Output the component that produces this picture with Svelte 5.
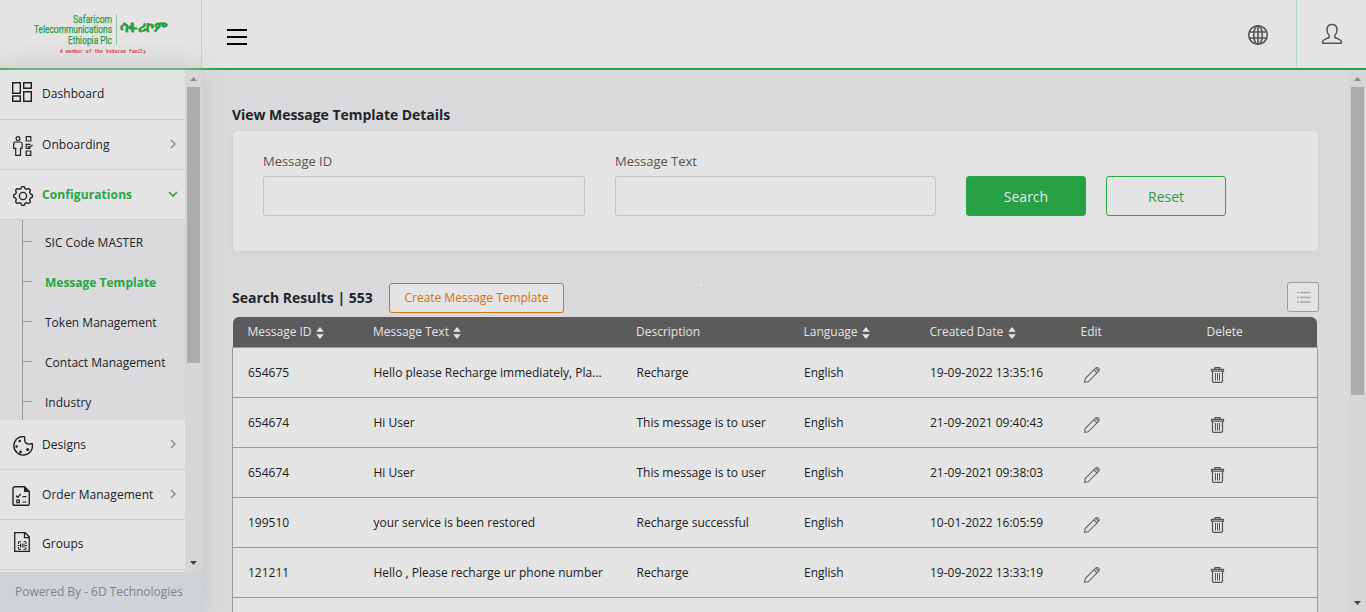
<script>
  const menuTop = [
    { label: 'Dashboard', icon: 'dash', arrow: '' },
    { label: 'Onboarding', icon: 'onboard', arrow: 'right' },
    { label: 'Configurations', icon: 'gear', arrow: 'down', active: true }
  ];
  const sub = ['SIC Code MASTER', 'Message Template', 'Token Management', 'Contact Management', 'Industry'];
  const menuBottom = [
    { label: 'Designs', icon: 'palette', arrow: 'right' },
    { label: 'Order Management', icon: 'order', arrow: 'right' },
    { label: 'Groups', icon: 'groups', arrow: '' }
  ];
  const columns = [
    { label: 'Message ID', sort: true },
    { label: 'Message Text', sort: true },
    { label: 'Description' },
    { label: 'Language', sort: true },
    { label: 'Created Date', sort: true },
    { label: 'Edit' },
    { label: 'Delete' }
  ];
  const rows = [
    ['654675', 'Hello please Recharge immediately, Pla...', 'Recharge', 'English', '19-09-2022 13:35:16'],
    ['654674', 'Hi User', 'This message is to user', 'English', '21-09-2021 09:40:43'],
    ['654674', 'Hi User', 'This message is to user', 'English', '21-09-2021 09:38:03'],
    ['199510', 'your service is been restored', 'Recharge successful', 'English', '10-01-2022 16:05:59'],
    ['121211', 'Hello , Please recharge ur phone number', 'Recharge', 'English', '19-09-2022 13:33:19'],
    ['', '', '', '', '']
  ];
  const gear = (() => {
    const pts = [];
    const n = 96;
    for (let i = 0; i < n; i++) {
      const a = (i / n) * Math.PI * 2;
      const r = 8.5 + 0.95 * Math.tanh(2.2 * Math.cos(8 * a));
      pts.push(`${(11 + r * Math.sin(a)).toFixed(2)} ${(10 - r * Math.cos(a)).toFixed(2)}`);
    }
    return 'M' + pts.join('L') + 'Z';
  })();
</script>

{#snippet menuIcon(name)}
  <svg class="micon" width="22" height="22" viewBox="0 0 22 22" fill="none" stroke="#222" stroke-width="1.2">
    {#if name === 'dash'}
      <path d="M.7.7h7.6v10.6H.7zM11.7.7h7.6v5.6h-7.6zM.7 14h7.6v5.300H.7zM11.7 9.700h7.600v9.600h-7.600z" stroke-width="1.400" />
    {:else if name === 'onboard'}
      <circle cx="6" cy="2.600" r="1.900" />
      <path d="M3.400 6h5.200q1.500 0 1.500 2v4.300H8.500v7H3.700v-7H1.700V8q0-2 1.700-2z" />
      <path d="M14.200.7h4.600v4.300h-4.600zM14.200 15h4.600v4.400h-4.600zM18.500 8.300h-4.300v4h4.300M16 10.200l1.300 1 3.300-2.300" />
    {:else if name === 'gear'}
      <path d={gear} stroke-width="1.400" />
      <circle cx="11" cy="10" r="3.600" stroke-width="1.400" />
    {:else if name === 'palette'}
      <path transform="translate(0 -1)" d="M11.800 1.500A9.300 9.300 0 1 0 20.300 9q.1-.5-.7-.4-3.900 1.400-6.200-1.100Q12.500 6.200 12.700 2.400q0-.9-.9-.9z" stroke-width="1.400" />
      <g fill="#222" stroke="none">
        <circle cx="7.700" cy="5" r="1.300" /><circle cx="4.600" cy="10.500" r="1.200" /><circle cx="8.500" cy="16" r="1.400" />
        <circle cx="15.700" cy="13.600" r="1.500" />
      </g>
    {:else if name === 'order'}
      <path d="M3 .8h9.500L17.300 5.600v12.200q0 1.500-1.500 1.500H2.500Q1 19.300 1 17.800V2.800Q1 .8 3 .8z" stroke-width="1.400" />
      <path d="M12 .5v5.500h5.500z" fill="#222" stroke="none" />
      <path d="M4 9.700l1.700 1.600L8.800 8M10.500 10.700h4M10.500 16h4M4.800 14.100h2.500v2.500H4.800z" />
    {:else}
      <path d="M2.700.7h10.500l4.100 4.300v14.300H2.700zM12.500 1v4.600h4.500" stroke-width="1.300" />
      <path d="M9 9.700H6.500v2.300M11.500 9.700H14v2.300M9 17.300H6.500V15M11.500 17.300H14V15M8.500 11.500v4M10.300 11.500v4M12 11.500v4M5.500 13.500h2M13 13.500h2" stroke-width="1" />
    {/if}
  </svg>
{/snippet}

{#snippet menuItem(item)}
  <div class="item" class:active={item.active} class:plain={!item.arrow}>
    {@render menuIcon(item.icon)}
    <span>{item.label}</span>
    {#if item.arrow}
      <svg class="arrow" width="10" height="10" viewBox="0 0 10 10" fill="none" stroke-width="1.600">
        <path d={item.arrow === 'right' ? 'M3 1l4 4-4 4' : 'M1 3l4 4 4-4'} stroke={item.arrow === 'right' ? '#8b969c' : '#28a745'} />
      </svg>
    {/if}
  </div>
{/snippet}

<div class="app">
  <header>
    <div class="brand">
      <svg width="150" height="50" viewBox="0 0 150 50" font-family="Roboto, sans-serif">
        <g fill="#299f45" stroke="#299f45" stroke-width=".25" font-size="10.300" text-anchor="end">
          <text x="86" y="12.500" textLength="39" lengthAdjust="spacingAndGlyphs">Safaricom</text>
          <text x="86" y="23" textLength="78" lengthAdjust="spacingAndGlyphs">Telecommunications</text>
          <text x="86" y="33.500" textLength="44" lengthAdjust="spacingAndGlyphs">Ethiopia Plc</text>
        </g>
        <path d="M90.500 4v31" stroke="#94c8a0" />
        <text x="94" y="22" textLength="48" lengthAdjust="spacingAndGlyphs" fill="#299f45" stroke="#299f45" stroke-width=".2" font-size="14" font-weight="700">ሳፋሪኮም</text>
        <text x="34" y="43" textLength="86" lengthAdjust="spacingAndGlyphs" fill="#d83b42" font-family="DejaVu Sans Mono, monospace" font-size="5.200" font-weight="700">A member of the Vodacom family</text>
      </svg>
    </div>
    <div class="burger"><i></i><i></i><i></i></div>
    <div class="lang">
      <svg width="22" height="22" viewBox="0 0 22 22" fill="none" stroke="#555" stroke-width="1.600">
        <circle cx="11" cy="11" r="9.300" /><ellipse cx="11" cy="11" rx="4.300" ry="9.300" />
        <path d="M11 1.700v18.600M2.500 8h17M2.500 14h17" />
      </svg>
    </div>
    <div class="user">
      <svg width="22" height="22" viewBox="0 0 22 22" fill="none" stroke="#555" stroke-width="1.500">
        <path d="M11 1.500c3.300 0 5 2 5 5.200 0 2.600-.8 4.300-2.200 5.900v1.700c1.700 1.300 6.200 2.200 6.600 4.100.1.900.1 1.900-.4 1.900H2c-.5 0-.5-1-.4-1.900.4-1.900 4.900-2.800 6.600-4.100v-1.700C6.800 11 6 9.300 6 6.700c0-3.200 1.700-5.200 5-5.200z" />
      </svg>
    </div>
  </header>

  <div class="body">
    <aside>
      <div class="menuwrap">
        <nav>
          {#each menuTop as item}{@render menuItem(item)}{/each}
          <div class="submenu">
            {#each sub as s}
              <div class="subitem" class:on={s === 'Message Template'}><i></i><span>{s}</span></div>
            {/each}
          </div>
          {#each menuBottom as item}{@render menuItem(item)}{/each}
        </nav>
        <div class="bar">
          <svg width="9" height="17" viewBox="0 0 9 17"><path d="M1 11l3.500-4L8 11z" fill="#8b8b8b" /></svg>
          <b class="side"></b>
          <svg class="end" width="9" height="17" viewBox="0 0 9 17"><path d="M1 6h7l-3.500 4z" fill="#444" /></svg>
        </div>
      </div>
      <footer>Powered By - 6D Technologies</footer>
    </aside>

    <main>
      <h1>View Message Template Details</h1>
      <section class="card">
        <div class="field"><label for="mid">Message ID</label><input id="mid" /></div>
        <div class="field"><label for="mtx">Message Text</label><input id="mtx" /></div>
        <button class="search">Search</button>
        <button class="reset">Reset</button>
      </section>
      <div class="results">
        <h2>Search Results | 553</h2>
        <button class="create">Create Message Template</button>
        <i class="dot"></i>
        <button class="list" aria-label="Columns">
          <svg width="14" height="12" viewBox="0 0 14 12" stroke="#a8a8a8"><path d="M0 1.500h2M0 6.500h2M0 11h2" stroke-width="1.500" /><path d="M3 1.500h10.500M3 6.500h10.500M3 11h10.500" stroke-width="1.300" /></svg>
        </button>
      </div>
      <div class="thead">
        {#each columns as c}
          <div>{c.label}{#if c.sort}<svg width="8" height="12" viewBox="0 0 8 12"><path d="M.2 4.700L4 0l3.800 4.700zM.2 7.300h7.600L4 12z" fill="#e4e4e4" /></svg>{/if}</div>
        {/each}
      </div>
      <div class="tbody">
        {#each rows as r}
          <div class="row">
            {#each r as cell}<div>{cell}</div>{/each}
            <div class="act">
              {#if r[0]}<svg width="18" height="18" viewBox="0 0 18 18" fill="none" stroke="#666" stroke-width="1.100"><path d="M1.600 16.400l.6-3.800L12.300 2.400q1.700-1.500 3.300 0 1.500 1.600-.3 3.300L5.200 15.800zM11 3.800L14.100 7M12.700 2.400l3 3" /></svg>{/if}
            </div>
            <div class="act">
              {#if r[0]}<svg width="16" height="18" viewBox="0 0 16 18" fill="none" stroke="#555" stroke-width="1.200"><path d="M1.500 3.400h12v1.800h-12zM5 3.400V1.600h5v1.800M2.500 5.200v9.800q0 1.400 1.500 1.400h7q1.500 0 1.500-1.400V5.200" /><path d="M5.500 7v7.500M7.500 7v7.500M9.500 7v7.500" stroke-width="1" /></svg>{/if}
            </div>
          </div>
        {/each}
      </div>
    </main>
    <div class="bar page">
      <svg width="9" height="17" viewBox="0 0 9 17"><path d="M1 11l3.500-4L8 11z" fill="#8b8b8b" /></svg>
      <b></b>
      <svg class="end" width="9" height="17" viewBox="0 0 9 17"><path d="M1 6h7l-3.500 4z" fill="#444" /></svg>
    </div>
  </div>
</div>

<style>
  :global(body) { margin: 0; overflow: hidden; }
  .app, .app * { box-sizing: border-box; }
  .app { width: 1366px; height: 612px; overflow: hidden; display: flex; flex-direction: column; background: #dadadc; font: 12px/20px "Open Sans", sans-serif; color: #212529; }
  svg { display: block; flex: none; }
  header { height: 70px; flex: none; display: flex; background: #e4e4e4; border-bottom: 2px solid #28a045; }
  .brand { width: 202px; border-right: 1px solid #bfd3c3; padding: 10px 0 0 26px; background: linear-gradient(#e4e4e4 60%, #e0e0e0); }
  .burger { padding: 29px 0 0 25px; display: flex; flex-direction: column; gap: 5px; flex: 1; }
  .burger i { width: 20px; height: 2px; background: #000; }
  .lang { width: 49px; padding-top: 24px; }
  .user { width: 70px; border-left: 1px solid #b4d6bd; padding: 23px 0 0 24px; }
  .body { flex: 1; display: flex; min-height: 0; }
  aside { width: 202px; flex: none; display: flex; flex-direction: column; box-shadow: 0 0 24px #c2c4c8; z-index: 1; }
  .menuwrap { height: 502px; display: flex; overflow: hidden; background: #e4e4e4; }
  nav { width: 185px; flex: none; }
  .item { height: 50px; border-bottom: 1px solid #cfcfd1; display: flex; align-items: center; padding-left: 12px; }
  .micon { margin-top: 4px; }
  .plain .micon { margin-top: 0; }
  .plain { padding-bottom: 3px; }
  .item span { margin-left: 8px; flex: 1; white-space: nowrap; letter-spacing: .05px; }
  .plain span { padding-top: 2px; }
  .item.active { color: #28a745; font-weight: 700; }
  .active span { letter-spacing: .1px; }
  .item .arrow { margin-right: 7px; margin-top: -1px; }
  .submenu { height: 200px; background: #dadadc; display: flex; flex-direction: column; padding-left: 22px; }
  .subitem { height: 40px; border-left: 1px solid #9b9b9d; display: flex; align-items: center; padding-top: 5px; }
  .subitem i { width: 9px; height: 1px; background: #9b9b9d; margin-top: -3px; }
  .subitem span { margin-left: 13px; font-size: 12px; white-space: nowrap; }
  .on span { color: #28a745; font-weight: 700; }
  .bar { width: 17px; flex: none; background: #d6d6d6; display: flex; flex-direction: column; align-items: center; }
  .bar b { width: 13px; height: 308px; background: #acacac; }
  .bar .side { height: 276px; }
  .bar .end { margin-top: auto; }
  footer { flex: 1; background: #cfd3d6; color: #7b868f; line-height: 39px; padding-left: 15px; white-space: nowrap; letter-spacing: -.03px; }
  main { flex: 1; padding: 35px 31px 0 30px; min-width: 0; }
  h1, h2 { margin: 0; font-size: 14px; font-weight: 700; line-height: 20px; white-space: nowrap; letter-spacing: -.04px; }
  .card { margin: 6px 0 0 1px; height: 120px; background: #e4e4e4; border-radius: 4px; box-shadow: 0 1px 5px #cccccf; padding: 20px 30px; display: flex; }
  .field { margin-right: 30px; width: 322px; }
  .field + .field { width: 321px; }
  label { display: block; font-size: 13px; line-height: 20px; color: #555; margin-bottom: 5px; letter-spacing: -.03px; }
  input { width: 100%; height: 40px; border: 1px solid #c5c5c5; border-radius: 3px; background: #e4e4e4; display: block; }
  button { font-family: inherit; padding: 0; border-radius: 3px; border: 1px solid #28a745; }
  .search, .reset { width: 120px; height: 40px; margin-top: 25px; font-size: 14px; }
  .search { background: #28a045; color: #e4e4e4; margin-right: 20px; }
  .reset { background: #e4e4e4; color: #28a045; }
  .results { height: 66px; padding-top: 31px; display: flex; align-items: flex-start; }
  h2 { margin-top: 6px; width: 157px; letter-spacing: 0; }
  .create { width: 175px; height: 30px; margin-top: 1px; padding-bottom: 2px; font-size: 12px; letter-spacing: -.03px; color: #cf7415; border-color: #cf7415; background: #e4e4e4; }
  .dot { width: 2px; height: 2px; margin: 2px 0 0 136px; background: #eee; }
  .list { width: 32px; height: 30px; margin: 0 -1px 0 auto; padding: 0 0 0 1px; background: #e4e4e4; border-color: #9e9e9e; display: flex; align-items: center; justify-content: center; }
  .thead, .row { display: grid; grid-template-columns: 125.500px 263px 167.500px 126px 151px 126px 1fr; }
  .thead { margin: 0 1px; height: 30px; background: #5b5b5b; color: #e4e4e4; border-radius: 6px 6px 0 0; padding: 0 0 0 14.500px; line-height: 30px; }
  .thead div { display: flex; align-items: flex-start; white-space: nowrap; }
  .thead svg { margin: 10px 0 0 4.500px; }
  .tbody { border: 1px solid #9b9b9b; border-bottom: 0; }
  .row { height: 50px; background: #e4e4e4; border-bottom: 1px solid #9b9b9b; line-height: 50px; padding-left: 15px; color: #212121; white-space: nowrap; }
  .act { padding: 18px 0 0 2px; }
  .act + .act { padding-left: 3px; }
</style>
